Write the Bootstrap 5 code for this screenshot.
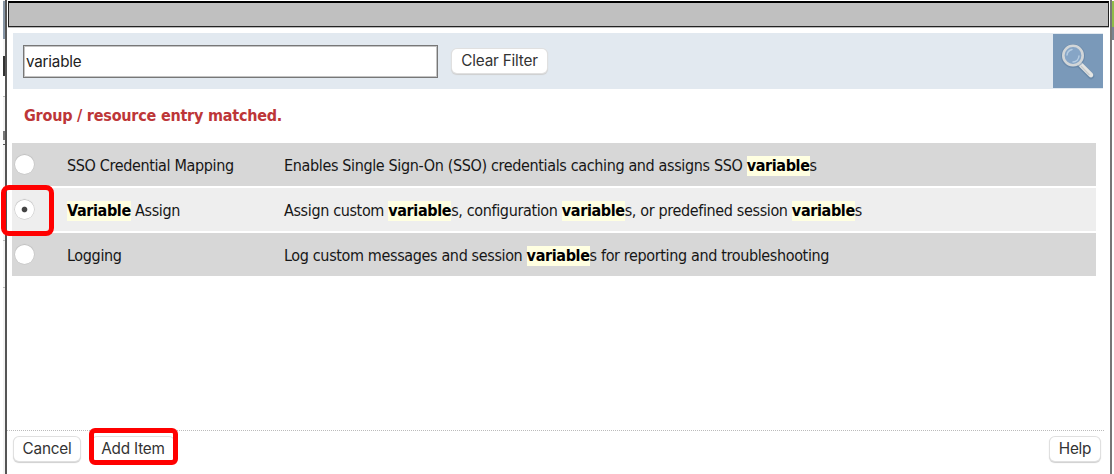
<!DOCTYPE html>
<html lang="en">
<head>
<meta charset="utf-8">
<title>Add Item</title>
<link href="https://cdn.jsdelivr.net/npm/bootstrap@5.3.0/dist/css/bootstrap.min.css" rel="stylesheet">
<style>
  body { height: 474px; background: #fff; color: #161616; font: 16px/20px "DejaVu Sans Condensed", "DejaVu Sans", sans-serif; letter-spacing: -.36px; white-space: nowrap; }
  .page-edge { width: 2px; margin-left: 3px; padding-top: 1px; background: #f4f4f4; }
  .page-edge i { display: block; width: 2px; }
  .edge-right { width: 2px; padding-top: 1px; }
  .dialog-box { width: 1108px; border: solid #555; border-width: 0 2px 0 2px; border-right-color: #777; }
  .title-strip { height: 26px; margin: 1px 1px 0 1px; background: #c0c0c0; border: 1px solid #222; border-top: 2px solid #000; box-shadow: 0 1px #bbb; }
  .filter-bar { height: 56px; margin: 6px 7px 0 6px; background: #e2e9f0; }
  .filter-input { width: 415px; height: 33px; margin-left: 10px; padding: 0 2px; border: 1px solid #777; box-shadow: inset 0 0 0 1px #c4c4c4; border-radius: 0; background: #fff; color: #222; font: 15.2px/31px Inter, sans-serif; letter-spacing: -.2px; outline: 0; }
  .mac-btn { height: 24px; padding: 0; border: 0; border-radius: 5px; background: #fff; color: #333; font: 15.3px/24px Inter, sans-serif; letter-spacing: -.2px; box-shadow: 0 0 0 1px #e0e0e0, 0 1px 1px 1px #cfcfcf; }
  .search-tile { width: 50px; height: 54px; background: #7a99b9; }
  .match-note { margin: 17px 0 0 17px; height: 20px; color: #bd3638; font-weight: 700; letter-spacing: -.22px; }
  .results { margin: 17px 14px 0 5px; gap: 2px; }
  .result { height: 43px; padding-top: 2px; background: #d7d7d7; }
  .result.chosen { background: #eee; }
  .result .radio-cell { width: 55px; padding: 0 0 2px 3px; }
  .result .name-cell { width: 217px; }
  .result b { display: inline-block; height: 20px; background: #ffffe1; color: #000; }
  .dot { width: 19px; height: 19px; border-radius: 50%; background: #fff; box-shadow: 0 0 0 .5px #c4c4c4, 0 -.5px 1px #aaa; }
  .chosen .dot { background: radial-gradient(circle, #444 2.3px, #fff 3.3px); }
  .callout { position: absolute; border: 5px solid #f00; }
  .foot { margin: 0 6px 0 0; height: 44px; border-top: 1px dotted #bbb; padding: 6px 4px 0 7px; }
</style>
</head>
<body class="d-flex overflow-hidden">
  <div class="page-edge"><i style="height:38px;background:#8796a6"></i><i style="height:17px;background:#f4f4f4"></i><i style="height:20px;background:#333"></i><i style="height:20px;background:#fff"></i><i style="height:1px;background:#bbb"></i><i style="height:34px"></i><i style="height:9px;background:#777"></i><i style="height:4px"></i><i style="height:1px;background:#555"></i><i style="height:95px"></i><i style="height:1px;background:#bbb"></i><i style="height:46px"></i><i style="height:1px;background:#bbb"></i></div>
  <main class="dialog-box d-flex flex-column">
    <div class="title-strip flex-shrink-0"></div>
    <form class="filter-bar d-flex align-items-center flex-shrink-0">
      <input class="filter-input" value="variable" aria-label="Filter">
      <button type="button" class="mac-btn" style="width:95px;margin-left:14px">Clear Filter</button>
      <div class="search-tile ms-auto">
        <svg width="50" height="54" viewBox="0 0 50 54">
          <path d="M27 31 38 42" stroke="#547494" stroke-width="6.5" stroke-linecap="round" opacity=".4"/>
          <path d="M27 30 38 41" stroke="#e4e5e3" stroke-width="4.6" stroke-linecap="round"/>
          <path d="M28 32 36.500 41" stroke="#c8cacb" stroke-width="1.2"/>
          <circle cx="20" cy="22" r="10.2" fill="none" stroke="#5c7c9d" stroke-width="3.6" opacity=".5"/>
          <circle cx="20" cy="21.500" r="9.700" fill="#86a5c6" stroke="#d2d6d8" stroke-width="2.6"/>
          <path d="M14 21a6.500 6.500 0 0 1 5-5.500M26 22a6.500 6.500 0 0 1-6 6" fill="none" stroke="#b5cce2" stroke-width="1.5" stroke-linecap="round"/>
        </svg>
      </div>
    </form>
    <div class="match-note">Group / resource entry matched.</div>
    <div class="results d-flex flex-column">
      <div class="result d-flex align-items-center"><div class="radio-cell"><div class="dot"></div></div><div class="name-cell">SSO Credential Mapping</div><div>Enables Single Sign-On (SSO) credentials caching and assigns SSO <b>variable</b>s</div></div>
      <div class="result chosen d-flex align-items-center"><div class="radio-cell"><div class="dot"></div></div><div class="name-cell"><b>Variable</b> Assign</div><div>Assign custom <b>variable</b>s, configuration <b>variable</b>s, or predefined session <b>variable</b>s</div></div>
      <div class="result d-flex align-items-center"><div class="radio-cell"><div class="dot"></div></div><div class="name-cell">Logging</div><div>Log custom messages and session <b>variable</b>s for reporting and troubleshooting</div></div>
    </div>
    <footer class="foot d-flex align-items-start mt-auto">
      <button type="button" class="mac-btn" style="width:66px">Cancel</button>
      <button type="button" class="mac-btn" style="width:82px;margin-left:12px">Add Item</button>
      <button type="button" class="mac-btn ms-auto" style="width:50px">Help</button>
    </footer>
  </main>
  <div class="edge-right"><i class="d-block" style="height:26px;background:#8fbc4a"></i><i class="d-block" style="height:13px;background:#7a8590"></i></div>
  <div class="callout" style="left:1px;top:185px;width:53px;height:51px;border-radius:8px"></div>
  <div class="callout" style="left:89px;top:428px;width:89px;height:37px;border-radius:6px"></div>
<script src="https://cdn.jsdelivr.net/npm/bootstrap@5.3.0/dist/js/bootstrap.bundle.min.js"></script>
</body>
</html>
